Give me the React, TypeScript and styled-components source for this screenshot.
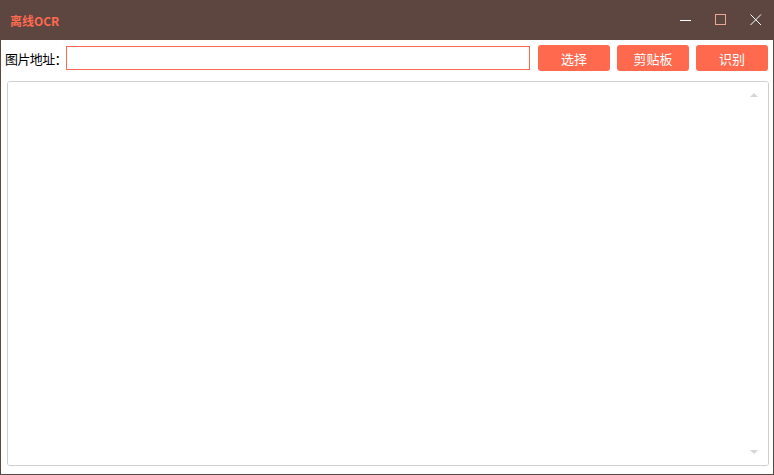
import styled, { createGlobalStyle } from "styled-components";
import { useState } from "react";

const ACCENT = "#ff6a4f";
const FRAME = "#5d4540";

const GlobalStyle = createGlobalStyle`
  html, body {
    margin: 0;
    padding: 0;
    background: ${FRAME};
  }
  * {
    box-sizing: border-box;
  }
`;

const App = () => {
  const [path, setPath] = useState<string>("");
  const [result, setResult] = useState<string>("");

  return (
    <>
      <GlobalStyle />
      <Frame>
        <TitleBar>
          <Title>离线OCR</Title>
          <Controls>
            <CtrlButton aria-label="minimize">
              <svg width="12" height="12" viewBox="0 0 12 12">
                <line x1="0" y1="6.5" x2="11" y2="6.5" stroke="#ffffff" strokeWidth="1" />
              </svg>
            </CtrlButton>
            <CtrlButton aria-label="maximize">
              <svg width="12" height="12" viewBox="0 0 12 12">
                <rect x="0.5" y="0.5" width="10" height="10" fill="none" stroke="#eaa894" strokeWidth="1" />
              </svg>
            </CtrlButton>
            <CtrlButton aria-label="close">
              <svg width="12" height="12" viewBox="0 0 12 12">
                <path d="M0.5 0.5 L11 11 M11 0.5 L0.5 11" stroke="#ffffff" strokeWidth="1" />
              </svg>
            </CtrlButton>
          </Controls>
        </TitleBar>

        <Body>
          <Toolbar>
            <Label htmlFor="imgPath">图片地址：</Label>
            <PathInput id="imgPath" value={path} onChange={(e) => setPath(e.target.value)} />
            <ActionButton>选择</ActionButton>
            <ActionButton>剪贴板</ActionButton>
            <ActionButton>识别</ActionButton>
          </Toolbar>

          <ResultBox>
            <ResultText value={result} onChange={(e) => setResult(e.target.value)} />
            <ScrollArrow dir="up" />
            <ScrollArrow dir="down" />
          </ResultBox>
        </Body>
      </Frame>
    </>
  );
};

export default App;

const Frame = styled.div`
  width: 774px;
  height: 475px;
  display: flex;
  flex-direction: column;
  padding: 0 1px 1px 1px;
  background: ${FRAME};
  font-family: "Noto Sans CJK SC", "Noto Sans", sans-serif;
`;

const TitleBar = styled.div`
  height: 40px;
  flex: none;
  display: flex;
  align-items: center;
  justify-content: space-between;
  padding-left: 9px;
`;

const Title = styled.div`
  color: ${ACCENT};
  font-size: 12px;
  font-weight: 700;
`;

const Controls = styled.div`
  display: flex;
  align-items: center;
  height: 100%;
`;

const CtrlButton = styled.div`
  width: 35px;
  height: 100%;
  display: flex;
  align-items: center;
  justify-content: center;
  svg {
    display: block;
  }
`;

const Body = styled.div`
  flex: 1;
  display: flex;
  flex-direction: column;
  background: #ffffff;
  padding: 5px 5px 8px 6px;
  gap: 10px;
`;

const Toolbar = styled.div`
  display: flex;
  align-items: center;
  height: 26px;
`;

const Label = styled.label`
  flex: none;
  width: 61px;
  font-size: 13px;
  letter-spacing: -0.6px;
  color: #000000;
  margin-left: -2px;
  white-space: nowrap;
  overflow: visible;
`;

const PathInput = styled.input`
  flex: 1;
  height: 24px;
  border: 1px solid ${ACCENT};
  outline: none;
  padding: 0 4px;
  font-size: 13px;
  margin-right: 8px;
  min-width: 0;
`;

const ActionButton = styled.button`
  width: 72px;
  height: 26px;
  border: none;
  border-radius: 3px;
  background: ${ACCENT};
  color: #ffffff;
  font-family: "Noto Sans CJK SC", "Noto Sans", sans-serif;
  font-size: 13px;
  padding: 0;
  & + & {
    margin-left: 7px;
  }
`;

const ResultBox = styled.div`
  flex: 1;
  position: relative;
  border: 1px solid #cfcfcf;
  border-radius: 3px;
  margin-right: -1px;
  overflow: hidden;
`;

const ResultText = styled.textarea`
  width: 100%;
  height: 100%;
  border: none;
  outline: none;
  resize: none;
  padding: 4px 24px 4px 6px;
  font-family: "Noto Sans CJK SC", "Noto Sans", sans-serif;
  font-size: 13px;
  overflow: hidden;
`;

const ScrollArrow = styled.div<{ dir: "up" | "down" }>`
  position: absolute;
  right: 10px;
  ${(p) => (p.dir === "up" ? "top: 11px;" : "bottom: 11px;")}
  width: 0;
  height: 0;
  border-left: 4px solid transparent;
  border-right: 4px solid transparent;
  ${(p) =>
    p.dir === "up"
      ? "border-bottom: 4px solid #d6d6d6;"
      : "border-top: 4px solid #d6d6d6;"}
`;
